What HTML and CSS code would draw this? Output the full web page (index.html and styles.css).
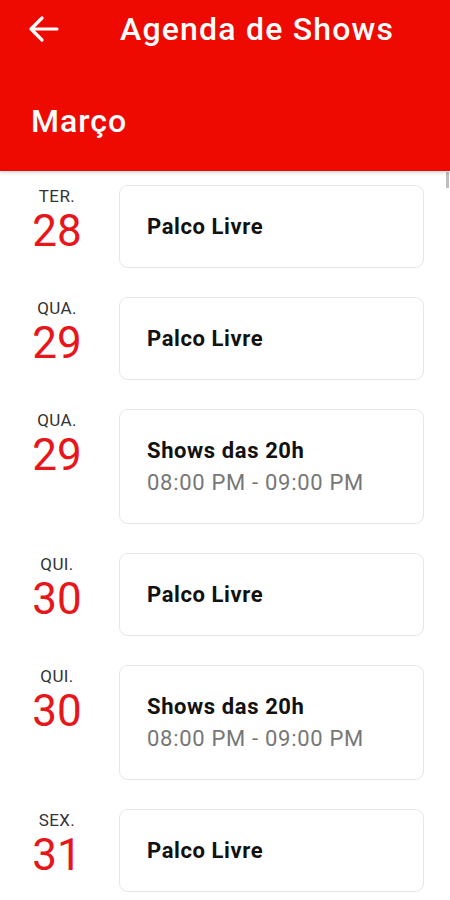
FILE: index.html
```html
<!DOCTYPE html>
<html>
<head>
    <title>Agenda de Shows</title>
    <link rel="stylesheet" href="styles.css">
</head>
<body>
    <div class="header">
        <div class="toolbar">
            <svg class="back" width="32" height="28" viewBox="0 0 32 28">
                <path d="M30 14H4M15 3L4 14l11 11" fill="none" stroke="#fff" stroke-width="3.2" stroke-linecap="round" stroke-linejoin="round"/>
            </svg>
            <div class="title">Agenda de Shows</div>
        </div>
        <div class="month">Março</div>
    </div>
    <div class="scrollbar"></div>

    <div class="list">
        <div class="row">
            <div class="date"><div class="day">TER.</div><div class="num">28</div></div>
            <div class="card"><div class="name">Palco Livre</div></div>
        </div>
        <div class="row">
            <div class="date"><div class="day">QUA.</div><div class="num">29</div></div>
            <div class="card"><div class="name">Palco Livre</div></div>
        </div>
        <div class="row">
            <div class="date"><div class="day">QUA.</div><div class="num">29</div></div>
            <div class="card tall"><div class="name">Shows das 20h</div><div class="time">08:00 PM - 09:00 PM</div></div>
        </div>
        <div class="row">
            <div class="date"><div class="day">QUI.</div><div class="num">30</div></div>
            <div class="card"><div class="name">Palco Livre</div></div>
        </div>
        <div class="row">
            <div class="date"><div class="day">QUI.</div><div class="num">30</div></div>
            <div class="card tall"><div class="name">Shows das 20h</div><div class="time">08:00 PM - 09:00 PM</div></div>
        </div>
        <div class="row">
            <div class="date"><div class="day">SEX.</div><div class="num">31</div></div>
            <div class="card"><div class="name">Palco Livre</div></div>
        </div>
    </div>
</body>
</html>
```

FILE: styles.css
```css
* {
    margin: 0;
    padding: 0;
    box-sizing: border-box;
    font-family: Roboto, "Liberation Sans", Arial, sans-serif;
}
body {
    background: #fff;
    overflow: hidden;
}
.header {
    background-color: #ee0a00;
    height: 171px;
    color: #fff;
    box-shadow: 0 2px 3px rgba(0, 0, 0, 0.15);
    position: relative;
    z-index: 1;
}
.toolbar {
    display: flex;
    align-items: center;
    height: 58px;
    padding-left: 27px;
}
.back {
    display: block;
}
.title {
    font-size: 32px;
    font-weight: 500;
    margin-left: 61px;
    letter-spacing: 1.2px;
}
.month {
    font-size: 32px;
    font-weight: 500;
    letter-spacing: 1px;
    padding: 44px 0 0 31px;
}
.scrollbar {
    position: absolute;
    top: 172px;
    right: 1px;
    width: 3px;
    height: 16px;
    background: #bdbdbd;
}
.list {
    padding: 14px 26px 0 17px;
    display: flex;
    flex-direction: column;
    gap: 29px;
}
.row {
    display: flex;
    align-items: flex-start;
}
.date {
    width: 80px;
    margin-right: 22px;
    text-align: center;
    padding-top: 2px;
}
.day {
    font-size: 17px;
    letter-spacing: 0.4px;
    color: #333;
    line-height: 18px;
}
.num {
    font-size: 44px;
    color: #e8161a;
    line-height: 48px;
    margin-top: 2px;
}
.card {
    flex: 1;
    height: 83px;
    border: 1.5px solid #e6e6e6;
    border-radius: 9px;
    padding-left: 27px;
    display: flex;
    flex-direction: column;
    justify-content: center;
}
.card.tall {
    height: 115px;
}
.name {
    font-size: 22px;
    font-weight: 700;
    letter-spacing: 0.6px;
    color: #111;
}
.time {
    font-size: 22px;
    letter-spacing: 0.7px;
    color: #777;
    margin-top: 7px;
}
```
